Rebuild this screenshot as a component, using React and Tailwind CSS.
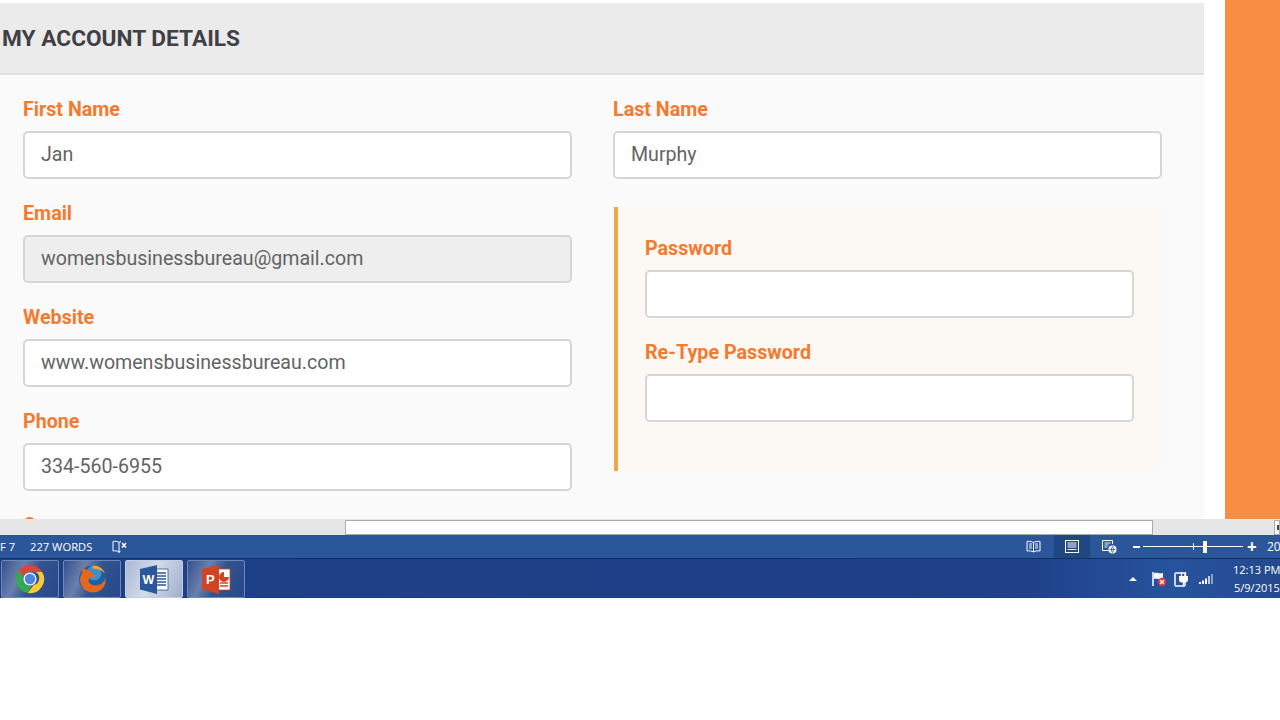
const roboto = "font-['Roboto',sans-serif]";

function Field({ label, value = '', disabled = false, className = 'w-full' }) {
  return (
    <div className={`mb-[21px] ${className}`}>
      <div className="h-[26px] mb-[9px] text-[19.7px] leading-[28px] font-bold text-[#f47a2f]">{label}</div>
      <div
        className={`h-12 rounded-[5px] border-2 border-[#d6d6d6] px-4 text-[19.6px] leading-[44px] text-[#636363] ${
          disabled ? 'bg-[#eeeeee]' : 'bg-white'
        }`}
      >
        {value}
      </div>
    </div>
  );
}

function ChromeIcon() {
  return (
    <svg width="30" height="30" viewBox="0 0 30 30">
      <path d="M15 1a14 14 0 0 1 12.100 7H15a7 7 0 0 0-6.600 4.600L3.900 6.400A14 14 0 0 1 15 1z" fill="#dc4437" />
      <path d="M3.900 6.400l4.500 6.200a7 7 0 0 0 8.300 9.200L12.800 29A14 14 0 0 1 3.900 6.400z" fill="#36a852" />
      <path d="M27.100 8A14 14 0 0 1 12.800 29l5.900-8a7 7 0 0 0 1.800-13z" fill="#fcc934" />
      <circle cx="15" cy="15" r="6.600" fill="#f1f3f4" />
      <circle cx="15" cy="15" r="5.200" fill="#4a86e0" />
    </svg>
  );
}

function FirefoxIcon() {
  return (
    <svg width="30" height="30" viewBox="0 0 30 30">
      <circle cx="15.500" cy="15" r="13.500" fill="#1f5f9e" />
      <circle cx="17" cy="9" r="7.500" fill="#3a8fd0" />
      <path d="M6 3c-1 3 0 5-2 8-2 5-.5 11 4 15 5 3.500 12 3.500 17-1 3-3 4-7 3.500-11-1 3-3 6-7 7-5 1.500-10-1-10-5 0-2 2-3 4-3 2.500 0 3-1.500 2-2.500-3-.5-3.500-2-3-3.500C11 6 8 6 6 3z" fill="#e8671f" />
      <path d="M16 1.500c6 0 10 3 12 8-3-3.500-7-5-11-4.500-1.500-1-2-2-1-3.500z" fill="#f9a51f" />
    </svg>
  );
}

function WordIcon() {
  return (
    <svg width="32" height="32" viewBox="0 0 32 32">
      <path d="M16 6h14v21H16z" fill="#ffffff" stroke="#2b579a" strokeWidth="0.8" />
      <path d="M19 10h9M19 13h9M19 16h9M19 19h9M19 22h9" stroke="#2b579a" strokeWidth="1.300" />
      <path d="M2 6l17-4v29L2 26.500z" fill="#2b579a" />
      <text x="4.500" y="21" fontFamily="Liberation Sans, sans-serif" fontSize="12.500" fontWeight="700" fill="#ffffff">W</text>
    </svg>
  );
}

function PowerPointIcon() {
  return (
    <svg width="32" height="32" viewBox="0 0 32 32">
      <path d="M16 6h14v21H16z" fill="#ffffff" stroke="#d04423" strokeWidth="0.8" />
      <path d="M24 9a5 5 0 1 0 5 5h-5z" fill="#d04423" />
      <path d="M20 20h8M20 23h8" stroke="#d04423" strokeWidth="1.500" />
      <path d="M2 6l17-4v29L2 26.500z" fill="#d04423" />
      <text x="6" y="21" fontFamily="Liberation Sans, sans-serif" fontSize="13" fontWeight="700" fill="#ffffff">P</text>
    </svg>
  );
}

function TaskButton({ active, children }) {
  return (
    <div
      className={`w-[58px] h-[38px] shrink-0 rounded-[2px] border flex items-center justify-center ${
        active
          ? 'border-[#c3cfe2] bg-[linear-gradient(115deg,#a9b8d3,#d3dbe9_45%,#9fb0cd)]'
          : 'border-[#6f88b6] bg-[linear-gradient(115deg,#34528f,#6a7fac_32%,#33538f_55%,#26488a)]'
      }`}
    >
      {children}
    </div>
  );
}

function BookIcon() {
  return (
    <svg width="15" height="14" viewBox="0 0 15 14" fill="none" stroke="#ffffff" strokeWidth="1">
      <path d="M7.500 2.500C6 1.500 3 1 1 1.500v9.500c2-.5 5 0 6.500 1 1.500-1 4.500-1.500 6.500-1V1.500c-2-.5-5 0-6.500 1zM7.500 2.500V12" />
      <path d="M3 4h3M3 6h3M3 8h3M9 4h3M9 6h3M9 8h3" strokeWidth="0.9" />
    </svg>
  );
}

function PrintLayoutIcon() {
  return (
    <svg width="14" height="13" viewBox="0 0 14 13" fill="none" stroke="#ffffff" strokeWidth="1">
      <rect x="0.500" y="0.500" width="13" height="12" />
      <path d="M2.500 3h9M2.500 5h9M2.500 7h9M2.500 9.500h9" />
    </svg>
  );
}

function WebIcon() {
  return (
    <svg width="15" height="14" viewBox="0 0 15 14" fill="none" stroke="#ffffff" strokeWidth="1">
      <path d="M7 10.500H.5V.5h10v3.500" />
      <path d="M2.500 3h6M2.500 5h4M2.500 7h3" strokeWidth="0.9" />
      <circle cx="10.500" cy="9.500" r="4" fill="#ffffff" stroke="none" />
      <path d="M7.500 9.500h6M10.500 6.500c-1.500 2-1.500 4 0 6M10.500 6.500c1.500 2 1.500 4 0 6" stroke="#2b579a" strokeWidth="0.8" />
    </svg>
  );
}

function ProofIcon() {
  return (
    <svg width="15" height="14" viewBox="0 0 15 14" fill="none" stroke="#ffffff" strokeWidth="1" className="shrink-0">
      <path d="M7 2.500C6 1.500 3 1 1 1.500V11c2-.5 4.500 0 6 1 .5-.4 1-.6 1.500-.8M7 2.500V13M7 2.500c.6-.5 1.300-.9 2-1.100" />
      <path d="M10 3l4 4.500M14 3l-4 4.500" strokeWidth="1.500" />
    </svg>
  );
}

function FlagIcon() {
  return (
    <svg width="16" height="16" viewBox="0 0 16 16" className="shrink-0">
      <path d="M2 1v14" stroke="#ffffff" strokeWidth="1.500" />
      <path d="M3 2c3-1 5 1 9 0v6c-4 1-6-1-9 0z" fill="#f4f6fa" />
      <circle cx="11" cy="11" r="4.200" fill="#d8393a" />
      <path d="M9 9l4 4M13 9l-4 4" stroke="#ffffff" strokeWidth="1.200" />
    </svg>
  );
}

function PlugIcon() {
  return (
    <svg width="15" height="16" viewBox="0 0 15 16" className="shrink-0">
      <rect x="1" y="2" width="10" height="13" rx="1" fill="none" stroke="#ffffff" strokeWidth="1.500" />
      <path d="M5 5h9v3.500a3 3 0 0 1-3 3H8a3 3 0 0 1-3-3z" fill="#ffffff" />
      <path d="M7.500 1v4M11.500 1v4M9.500 11v4" stroke="#ffffff" strokeWidth="1.300" />
    </svg>
  );
}

function SignalIcon() {
  return (
    <svg width="15" height="12" viewBox="0 0 15 12" fill="#ffffff" className="shrink-0">
      <rect x="0" y="9" width="2" height="2" />
      <rect x="3" y="7.500" width="2" height="3.500" />
      <rect x="6" y="5.500" width="2" height="5.500" />
      <rect x="9" y="3" width="2" height="8" opacity="0.7" />
      <rect x="12" y="1" width="2" height="10" opacity="0.45" />
    </svg>
  );
}

export default function App() {
  return (
    <div className={`w-[1280px] h-[720px] bg-white overflow-hidden ${roboto}`}>
      {/* page inside the document window */}
      <div className="h-[519px] flex overflow-hidden">
        <div className="w-[1204px] pt-[3px] bg-white">
          <div className="h-[72px] bg-[#ebebeb] border-b-2 border-[#e0e0e0] pl-[2px] text-[22.7px] leading-[71px] font-bold text-[#404045]">
            MY ACCOUNT DETAILS
          </div>
          <div className="h-[460px] bg-[#fafafa] pt-[21px] pl-[23px] pr-[42px] grid grid-cols-2 gap-x-[41px] items-start">
            <div>
              <Field label="First Name" value="Jan" />
              <Field label="Email" value="womensbusinessbureau@gmail.com" disabled />
              <Field label="Website" value="www.womensbusinessbureau.com" />
              <Field label="Phone" value="334-560-6955" />
              <Field label="Company" />
            </div>
            <div>
              <Field label="Last Name" value="Murphy" />
              <div className="mt-[28px] ml-px border-l-4 border-[#f1a64b] bg-[#fcf8f3] pt-[28px] pb-[7px] pl-[27px] pr-[28px]">
                <Field label="Password" />
                <Field label="Re-Type Password" />
                <div className="h-[21px]"></div>
              </div>
            </div>
          </div>
        </div>
        <div className="w-[21px] bg-white"></div>
        <div className="flex-1 bg-[#f98d43]"></div>
      </div>

      {/* horizontal scrollbar */}
      <div className="h-4 bg-[#e6e6e6] flex items-center pl-[345px]">
        <div className="w-[808px] h-[15px] bg-white border border-[#ababab]"></div>
        <div className="ml-[121px] w-[6px] h-[15px] bg-white border border-[#ababab] flex items-center">
          <div className="ml-[2px] w-[3px] h-[5px] bg-[#444444]"></div>
        </div>
      </div>

      {/* word status bar */}
      <div className="h-[23px] bg-[#2b579a] flex items-center text-white font-['Open_Sans',sans-serif] text-[11.2px] whitespace-nowrap overflow-hidden">
        <span className="w-[30px] shrink-0 pt-px">F 7</span>
        <span className="w-[82px] shrink-0 pt-px">227 WORDS</span>
        <ProofIcon />
        <div className="ml-[899px] w-[15px] shrink-0">
          <BookIcon />
        </div>
        <div className="ml-[13px] w-[36px] h-[23px] shrink-0 bg-[#1f4782] flex items-center justify-center">
          <PrintLayoutIcon />
        </div>
        <div className="ml-[12px] w-[15px] shrink-0">
          <WebIcon />
        </div>
        <div className="ml-[16px] w-[7px] h-[2px] shrink-0 bg-white"></div>
        <div className="ml-[3px] w-[100px] h-3 shrink-0 flex items-center">
          <div className="w-[50px] h-px bg-white"></div>
          <div className="w-px h-[7px] bg-white"></div>
          <div className="w-[9px] h-px bg-white"></div>
          <div className="w-1 h-3 bg-white"></div>
          <div className="flex-1 h-px bg-white"></div>
        </div>
        <span className="ml-[4px] text-[17px] leading-none font-bold w-[10px] shrink-0">+</span>
        <span className="ml-[10px] text-[12px] shrink-0">20</span>
      </div>

      {/* windows taskbar */}
      <div className="h-[40px] flex items-center pl-px gap-1 border-t border-[#14305f] bg-[linear-gradient(90deg,#1d3f86,#1f4189_80%,#27539d_92%,#24498f)] whitespace-nowrap overflow-hidden">
        <TaskButton><ChromeIcon /></TaskButton>
        <TaskButton><FirefoxIcon /></TaskButton>
        <TaskButton active><WordIcon /></TaskButton>
        <TaskButton><PowerPointIcon /></TaskButton>
        <div className="ml-[880px] w-0 h-0 shrink-0 border-x-[4px] border-x-transparent border-b-[4px] border-b-white"></div>
        <div className="ml-[10px]"><FlagIcon /></div>
        <div className="ml-[3px]"><PlugIcon /></div>
        <div className="ml-[6px]"><SignalIcon /></div>
        <div className="ml-[15px] shrink-0 font-['Open_Sans',sans-serif] text-[11px] leading-[18px] text-white">
          <div>12:13 PM</div>
          <div className="pl-px">5/9/2015</div>
        </div>
      </div>
    </div>
  );
}
